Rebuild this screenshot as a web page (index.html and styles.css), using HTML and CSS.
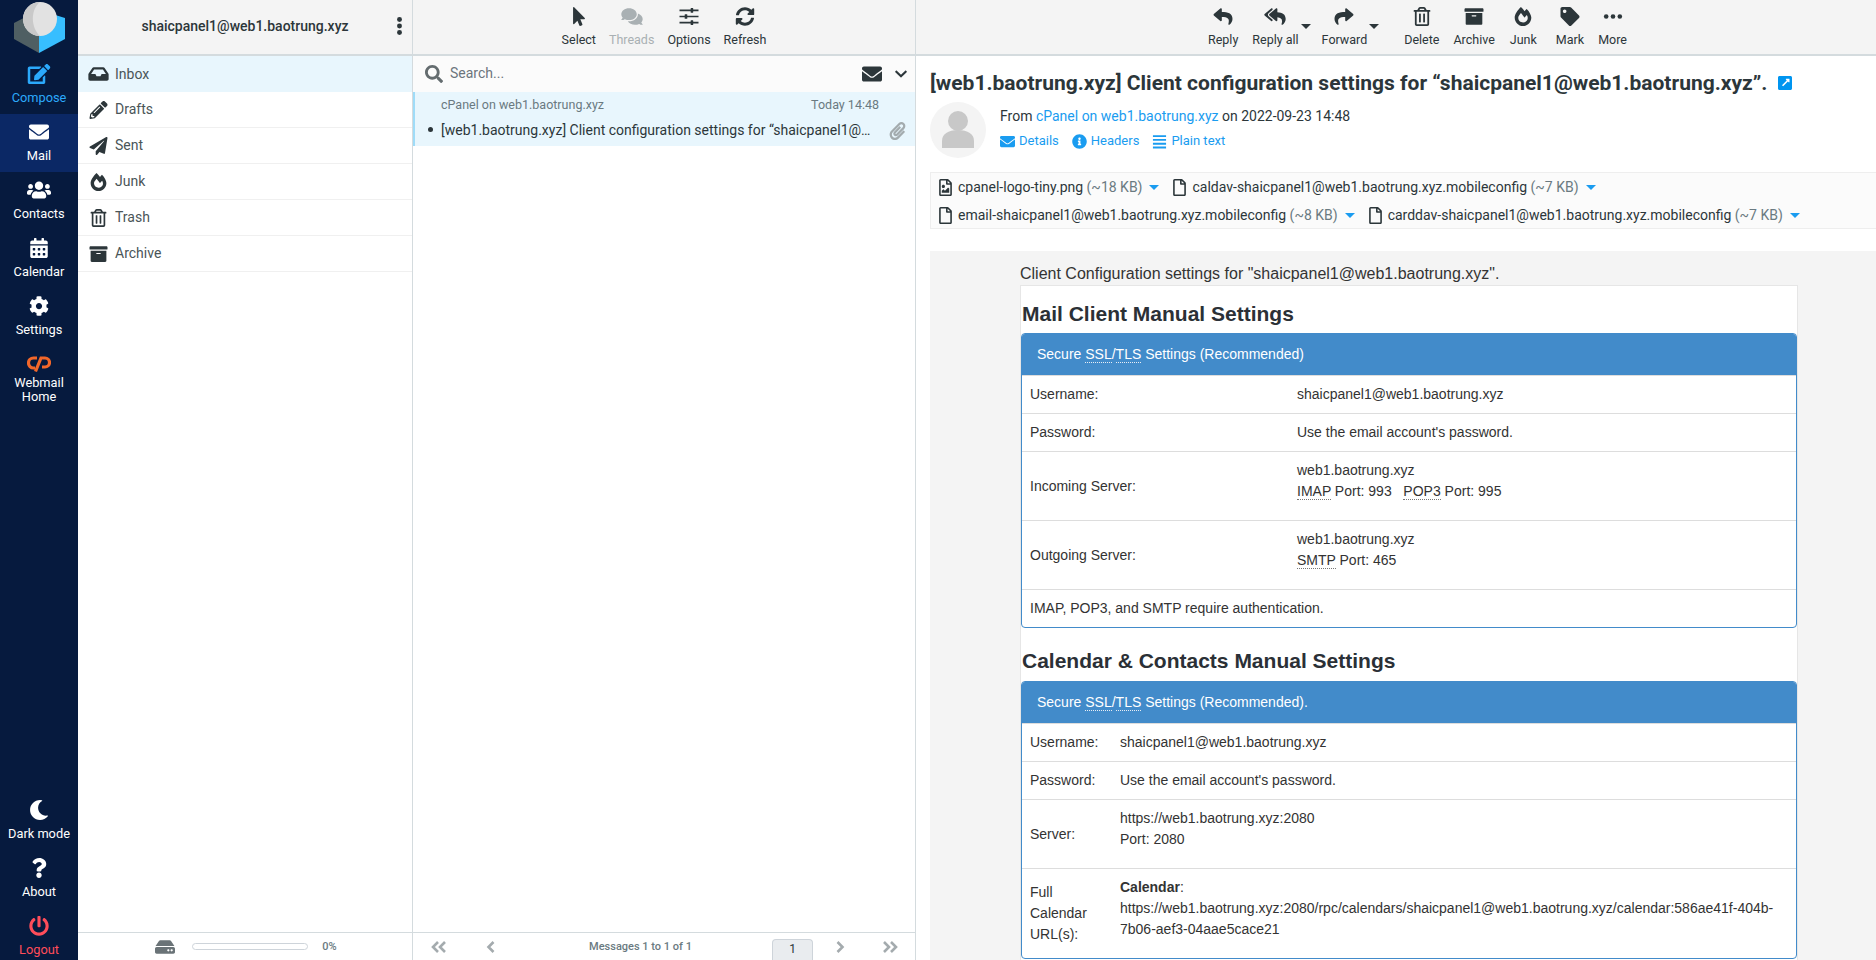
FILE: index.html
```html
<!DOCTYPE html>
<html lang="en">
<head>
    <meta charset="UTF-8">
    <title>Roundcube Webmail :: [web1.baotrung.xyz] Client configuration settings</title>
    <link rel="stylesheet" href="styles.css">
</head>
<body>

<!-- icon set -->
<svg class="icon-set" xmlns="http://www.w3.org/2000/svg">
    <symbol id="i-edit" viewBox="0 0 576 512"><path d="M402.6 83.2l90.2 90.2c3.8 3.8 3.8 10 0 13.8L274.4 405.6l-92.8 10.3c-12.4 1.4-22.9-9.1-21.5-21.5l10.3-92.8L388.8 83.2c3.8-3.8 10-3.8 13.8 0zm162-22.9l-48.8-48.8c-15.2-15.2-39.9-15.2-55.2 0l-35.4 35.4c-3.8 3.8-3.8 10 0 13.8l90.2 90.2c3.8 3.8 10 3.8 13.8 0l35.4-35.4c15.2-15.3 15.2-40 0-55.2zM384 346.2V448H64V128h229.8c3.2 0 6.2-1.3 8.5-3.5l40-40c7.6-7.6 2.2-20.5-8.5-20.5H48C21.5 64 0 85.5 0 112v352c0 26.5 21.5 48 48 48h352c26.5 0 48-21.5 48-48V306.2c0-10.7-12.9-16-20.5-8.5l-40 40c-2.2 2.3-3.5 5.3-3.5 8.5z"/></symbol>
    <symbol id="i-envelope" viewBox="0 0 512 512"><path d="M502.3 190.8c3.9-3.1 9.7-.2 9.7 4.7V400c0 26.5-21.5 48-48 48H48c-26.5 0-48-21.5-48-48V195.6c0-5 5.7-7.8 9.7-4.7 22.4 17.4 52.1 39.5 154.1 113.6 21.1 15.4 56.7 47.8 92.2 47.6 35.7.3 72-32.8 92.3-47.6 102-74.1 131.6-96.3 154-113.7zM256 320c23.2.4 56.6-29.2 73.4-41.4 132.7-96.3 142.8-104.7 173.4-128.7 5.8-4.5 9.2-11.5 9.2-18.9v-19c0-26.5-21.5-48-48-48H48C21.5 64 0 85.5 0 112v19c0 7.4 3.4 14.3 9.2 18.9 30.6 23.9 40.7 32.4 173.4 128.7 16.8 12.2 50.2 41.8 73.4 41.4z"/></symbol>
    <symbol id="i-users" viewBox="0 0 640 512"><path d="M96 224c35.3 0 64-28.7 64-64s-28.7-64-64-64-64 28.7-64 64 28.7 64 64 64zm448 0c35.3 0 64-28.7 64-64s-28.7-64-64-64-64 28.7-64 64 28.7 64 64 64zm32 32h-64c-17.6 0-33.5 7.1-45.1 18.6 40.3 22.1 68.9 62 75.1 109.4h66c17.7 0 32-14.3 32-32v-32c0-35.3-28.7-64-64-64zm-256 0c61.9 0 112-50.1 112-112S381.9 32 320 32 208 82.1 208 144s50.1 112 112 112zm76.8 32h-8.3c-20.8 10-43.9 16-68.5 16s-47.6-6-68.5-16h-8.3C179.6 288 128 339.6 128 403.2V432c0 26.5 21.5 48 48 48h288c26.5 0 48-21.5 48-48v-28.8c0-63.6-51.6-115.2-115.2-115.2zm-223.7-13.4C161.5 263.1 145.6 256 128 256H64c-35.3 0-64 28.7-64 64v32c0 17.7 14.3 32 32 32h65.9c6.3-47.4 34.9-87.3 75.2-109.4z"/></symbol>
    <symbol id="i-calendar" viewBox="0 0 448 512"><path d="M0 464c0 26.5 21.5 48 48 48h352c26.5 0 48-21.5 48-48V192H0v272zm320-196c0-6.6 5.4-12 12-12h40c6.6 0 12 5.4 12 12v40c0 6.6-5.4 12-12 12h-40c-6.6 0-12-5.4-12-12v-40zm0 128c0-6.6 5.4-12 12-12h40c6.6 0 12 5.4 12 12v40c0 6.6-5.4 12-12 12h-40c-6.6 0-12-5.4-12-12v-40zM192 268c0-6.6 5.4-12 12-12h40c6.6 0 12 5.4 12 12v40c0 6.6-5.4 12-12 12h-40c-6.6 0-12-5.4-12-12v-40zm0 128c0-6.6 5.4-12 12-12h40c6.6 0 12 5.4 12 12v40c0 6.6-5.4 12-12 12h-40c-6.6 0-12-5.4-12-12v-40zM64 268c0-6.6 5.4-12 12-12h40c6.6 0 12 5.4 12 12v40c0 6.6-5.4 12-12 12H76c-6.6 0-12-5.4-12-12v-40zm0 128c0-6.6 5.4-12 12-12h40c6.6 0 12 5.4 12 12v40c0 6.6-5.4 12-12 12H76c-6.6 0-12-5.4-12-12v-40zM400 64h-48V16c0-8.8-7.2-16-16-16h-32c-8.8 0-16 7.2-16 16v48H160V16c0-8.8-7.2-16-16-16h-32c-8.8 0-16 7.2-16 16v48H48C21.5 64 0 85.5 0 112v48h448v-48c0-26.5-21.5-48-48-48z"/></symbol>
    <symbol id="i-cog" viewBox="0 0 512 512"><path d="M487.4 315.7l-42.6-24.6c4.3-23.2 4.3-47 0-70.2l42.6-24.6c4.9-2.8 7.1-8.6 5.5-14-11.1-35.6-30-67.8-54.7-94.6-3.8-4.1-10-5.1-14.8-2.3L380.8 110c-17.9-15.4-38.5-27.3-60.8-35.1V25.8c0-5.6-3.9-10.5-9.4-11.7-36.7-8.2-74.3-7.8-109.2 0-5.5 1.2-9.4 6.1-9.4 11.7V75c-22.2 7.9-42.8 19.8-60.8 35.1L88.7 85.5c-4.9-2.8-11-1.9-14.8 2.3-24.7 26.7-43.6 58.9-54.7 94.6-1.7 5.4.6 11.2 5.5 14L67.3 221c-4.3 23.2-4.3 47 0 70.2l-42.6 24.6c-4.9 2.8-7.1 8.6-5.5 14 11.1 35.6 30 67.8 54.7 94.6 3.8 4.1 10 5.1 14.8 2.3l42.6-24.6c17.9 15.4 38.5 27.3 60.8 35.1v49.2c0 5.6 3.9 10.5 9.4 11.7 36.7 8.2 74.3 7.8 109.2 0 5.5-1.2 9.4-6.1 9.4-11.7v-49.2c22.2-7.9 42.8-19.8 60.8-35.1l42.6 24.6c4.9 2.8 11 1.9 14.8-2.3 24.7-26.7 43.6-58.9 54.7-94.6 1.5-5.5-.7-11.3-5.6-14.1zM256 336c-44.1 0-80-35.9-80-80s35.9-80 80-80 80 35.9 80 80-35.9 80-80 80z"/></symbol>
    <symbol id="i-moon" viewBox="0 0 512 512"><path d="M283.211 512c78.962 0 151.079-35.925 198.857-94.792 7.068-8.708-.639-21.43-11.562-19.35-124.203 23.654-238.262-71.576-238.262-196.954 0-72.222 38.662-138.635 101.498-174.394 9.686-5.512 7.25-20.197-3.756-22.23A258.156 258.156 0 0 0 283.211 0c-141.309 0-256 114.511-256 256 0 141.309 114.511 256 256 256z"/></symbol>
    <symbol id="i-question" viewBox="0 0 384 512"><path d="M202.021 0C122.202 0 70.503 32.703 29.914 91.026c-7.363 10.58-5.093 25.086 5.178 32.874l43.138 32.709c10.373 7.865 25.132 6.026 33.253-4.148 25.049-31.381 43.63-49.449 82.757-49.449 30.764 0 68.816 19.799 68.816 49.631 0 22.552-18.617 34.134-48.993 51.164-35.423 19.86-82.299 44.576-82.299 106.405V320c0 13.255 10.745 24 24 24h72.471c13.255 0 24-10.745 24-24v-5.773c0-42.86 125.268-44.645 125.268-160.627C377.504 66.256 286.902 0 202.021 0zM192 373.459c-38.196 0-69.271 31.075-69.271 69.271 0 38.195 31.075 69.27 69.271 69.27s69.271-31.075 69.271-69.271-31.075-69.27-69.271-69.27z"/></symbol>
    <symbol id="i-power" viewBox="0 0 512 512"><path d="M400 54.1c63 45 104 118.6 104 201.9 0 136.8-110.8 247.7-247.5 248C120 504.3 8.2 393 8 256.4 7.9 173.1 48.9 99.3 111.8 54.2c11.7-8.3 28-4.8 35 7.7L162.6 90c5.9 10.5 3.1 23.8-6.6 31-41.5 30.8-68 79.6-68 134.9-.1 92.3 74.5 168.1 168 168.1 91.6 0 168.6-74.2 168-169.1-.3-51.8-24.7-101.8-68.1-134-9.7-7.2-12.4-20.5-6.5-30.9l15.8-28.1c7-12.4 23.2-16.1 34.8-7.8zM296 264V24c0-13.3-10.7-24-24-24h-32c-13.3 0-24 10.7-24 24v240c0 13.3 10.7 24 24 24h32c13.3 0 24-10.7 24-24z"/></symbol>
    <symbol id="i-inbox" viewBox="0 0 576 512"><path d="M567.938 243.908L462.25 85.374A48.003 48.003 0 0 0 422.311 64H153.689a48 48 0 0 0-39.938 21.374L8.062 243.908A47.994 47.994 0 0 0 0 270.533V400c0 26.51 21.49 48 48 48h480c26.51 0 48-21.49 48-48V270.533a47.994 47.994 0 0 0-8.062-26.625zM162.252 128h251.497l85.333 128H376l-32 64H232l-32-64H76.918l85.334-128z"/></symbol>
    <symbol id="i-pencil" viewBox="0 0 512 512"><path d="M497.9 142.1l-46.1 46.1c-4.7 4.7-12.3 4.7-17 0l-111-111c-4.7-4.7-4.7-12.3 0-17l46.1-46.1c18.7-18.7 49.1-18.7 67.9 0l60.1 60.1c18.8 18.7 18.8 49.1 0 67.9zM284.2 99.8L21.6 362.4.4 483.9c-2.9 16.4 11.4 30.6 27.8 27.8l121.5-21.3 262.6-262.6c4.7-4.7 4.7-12.3 0-17l-111-111c-4.8-4.7-12.4-4.7-17.1 0zM124.1 339.9c-5.5-5.5-5.5-14.3 0-19.8l154-154c5.5-5.5 14.3-5.5 19.8 0s5.5 14.3 0 19.8l-154 154c-5.5 5.5-14.3 5.5-19.8 0zM88 424h48v36.3l-64.5 11.3-31.1-31.1L51.7 376H88v48z"/></symbol>
    <symbol id="i-plane" viewBox="0 0 512 512"><path d="M476 3.2L12.5 270.6c-18.1 10.4-15.8 35.6 2.2 43.2L121 358.4l287.3-253.2c5.5-4.9 13.3 2.6 8.6 8.3L176 407v80.5c0 23.6 28.5 32.9 42.5 15.8L282 426l124.6 52.2c14.2 6 30.4-2.9 33-18.2l72-432C515 7.8 493.3-6.8 476 3.2z"/></symbol>
    <symbol id="i-fire" viewBox="0 0 448 512"><path d="M323.56 51.2c-20.8 19.3-39.58 39.59-56.22 59.97C240.08 73.62 206.28 35.53 168 0 69.74 91.17 0 209.96 0 281.6 0 408.85 100.29 512 224 512s224-103.15 224-230.4c0-53.27-51.98-163.14-124.44-230.4zm-19.47 340.65C282.43 407.01 255.72 416 226.86 416 154.71 416 96 368.26 96 290.75c0-38.61 24.31-72.63 72.79-130.75 6.93 7.98 98.83 125.34 98.83 125.34l58.63-66.88c4.14 6.85 7.91 13.55 11.27 19.97 27.35 52.19 15.81 118.97-33.43 153.42z"/></symbol>
    <symbol id="i-trash" viewBox="0 0 448 512"><path d="M268 416h24a12 12 0 0 0 12-12V188a12 12 0 0 0-12-12h-24a12 12 0 0 0-12 12v216a12 12 0 0 0 12 12zM432 80h-82.41l-34-56.7A48 48 0 0 0 274.41 0H173.59a48 48 0 0 0-41.16 23.3L98.41 80H16A16 16 0 0 0 0 96v16a16 16 0 0 0 16 16h16v336a48 48 0 0 0 48 48h288a48 48 0 0 0 48-48V128h16a16 16 0 0 0 16-16V96a16 16 0 0 0-16-16zM171.84 50.91A6 6 0 0 1 177 48h94a6 6 0 0 1 5.15 2.91L293.61 80H154.39zM368 464H80V128h288zm-212-48h24a12 12 0 0 0 12-12V188a12 12 0 0 0-12-12h-24a12 12 0 0 0-12 12v216a12 12 0 0 0 12 12z"/></symbol>
    <symbol id="i-archive" viewBox="0 0 512 512"><path d="M32 448c0 17.7 14.3 32 32 32h384c17.7 0 32-14.3 32-32V160H32v288zm160-212c0-6.6 5.4-12 12-12h104c6.6 0 12 5.4 12 12v8c0 6.6-5.4 12-12 12H204c-6.6 0-12-5.4-12-12v-8zM480 32H32C14.3 32 0 46.3 0 64v48c0 8.8 7.2 16 16 16h480c8.8 0 16-7.2 16-16V64c0-17.7-14.3-32-32-32z"/></symbol>
    <symbol id="i-pointer" viewBox="0 0 320 512"><path d="M302.189 329.126H196.105l55.831 135.993c3.889 9.428-.555 19.999-9.444 23.999l-49.165 21.427c-9.165 4-19.443-.571-23.332-9.714l-53.053-129.136-86.664 89.138C18.729 472.71 0 463.554 0 447.977V18.299C0 1.899 19.921-6.096 30.277 5.443l284.412 292.542c11.472 11.179 3.007 31.141-12.5 31.141z"/></symbol>
    <symbol id="i-comments" viewBox="0 0 576 512"><path d="M416 192c0-88.4-93.1-160-208-160S0 103.6 0 192c0 34.3 14.1 65.9 38 92-13.4 30.2-35.5 54.2-35.8 54.5-2.2 2.3-2.8 5.7-1.5 8.7S4.8 352 8 352c36.6 0 66.9-12.3 88.7-25 32.2 15.7 70.3 25 111.3 25 114.9 0 208-71.6 208-160zm122 220c23.9-26 38-57.7 38-92 0-66.9-53.5-124.2-129.3-148.1.9 6.6 1.3 13.3 1.3 20.1 0 105.9-107.7 192-240 192-10.8 0-21.3-.8-31.7-1.9C207.8 439.6 281.8 480 368 480c41 0 79.1-9.2 111.3-25 21.8 12.7 52.1 25 88.7 25 3.2 0 6.1-1.9 7.3-4.8 1.3-2.9.7-6.3-1.5-8.7-.3-.3-22.4-24.2-35.8-54.500z"/></symbol>
    <symbol id="i-sliders" viewBox="0 0 512 512"><path d="M0 70h512v44H0zM0 234h512v44H0zM0 398h512v44H0zM310 30h50q10 0 10 10v104q0 10-10 10h-50q-10 0-10-10V40q0-10 10-10zM150 194h50q10 0 10 10v104q0 10-10 10h-50q-10 0-10-10V204q0-10 10-10zM310 358h50q10 0 10 10v104q0 10-10 10h-50q-10 0-10-10V368q0-10 10-10z"/></symbol>
    <symbol id="i-sync" viewBox="0 0 512 512"><path d="M370.72 133.28C339.458 104.008 298.888 87.962 255.848 88c-77.458.068-144.328 53.178-162.791 126.85-1.344 5.363-6.122 9.15-11.651 9.15H24.103c-7.498 0-13.194-6.807-11.807-14.176C33.933 94.924 134.813 8 256 8c66.448 0 126.791 26.136 171.315 68.685L463.03 40.97C478.149 25.851 504 36.559 504 57.941V192c0 13.255-10.745 24-24 24H345.941c-21.382 0-32.09-25.851-16.971-40.971l41.75-41.749zM32 296h134.059c21.382 0 32.09 25.851 16.971 40.971l-41.75 41.75c31.262 29.273 71.835 45.319 114.876 45.28 77.418-.07 144.315-53.144 162.787-126.849 1.344-5.363 6.122-9.15 11.651-9.15h57.304c7.498 0 13.194 6.807 11.807 14.176C478.067 417.076 377.187 504 256 504c-66.448 0-126.791-26.136-171.315-68.685L48.97 471.03C33.851 486.149 8 475.441 8 454.059V320c0-13.255 10.745-24 24-24z"/></symbol>
    <symbol id="i-reply" viewBox="0 0 512 512"><path d="M8.309 189.836L184.313 37.851C199.719 24.546 224 35.347 224 56.015v80.053c160.629 1.839 288 34.032 288 186.258 0 61.441-39.581 122.309-83.333 154.132-13.653 9.931-33.111-2.533-28.077-18.631 45.344-145.012-21.507-183.51-176.59-185.742V360c0 20.7-24.3 31.453-39.687 18.164l-176.004-152c-11.071-9.562-11.086-26.753 0-36.328z"/></symbol>
    <symbol id="i-reply-all" viewBox="0 0 576 512"><path d="M136.309 189.836L312.313 37.851C327.72 24.546 352 35.348 352 56.015v82.763c129.182 10.231 224 52.212 224 183.548 0 61.441-39.582 122.309-83.333 154.132-13.653 9.931-33.111-2.533-28.077-18.631 38.512-123.162-3.922-169.482-112.59-182.015v84.175c0 20.701-24.3 31.453-39.687 18.164L136.309 226.164c-11.071-9.561-11.086-26.753 0-36.328zm-128 36.328L184.313 378.15C199.7 391.439 224 380.687 224 359.986v-15.818l-108.606-93.785A55.96 55.96 0 0 1 96 207.998a55.953 55.953 0 0 1 19.393-42.38L224 71.832V56.015c0-20.667-24.28-31.469-39.687-18.164L8.309 189.836c-11.086 9.575-11.071 26.767 0 36.328z"/></symbol>
    <symbol id="i-share" viewBox="0 0 512 512"><path d="M503.691 189.836L327.687 37.851C312.281 24.546 288 35.347 288 56.015v80.053C127.371 137.907 0 170.1 0 322.326c0 61.441 39.581 122.309 83.333 154.132 13.653 9.931 33.111-2.533 28.077-18.631C66.066 312.814 132.917 274.316 288 272.085V360c0 20.7 24.3 31.453 39.687 18.164l176.004-152c11.071-9.562 11.086-26.753 0-36.328z"/></symbol>
    <symbol id="i-tag" viewBox="0 0 512 512"><path d="M0 252.118V48C0 21.49 21.49 0 48 0h204.118a48 48 0 0 1 33.941 14.059l211.882 211.882c18.745 18.745 18.745 49.137 0 67.882L293.823 497.941c-18.745 18.745-49.137 18.745-67.882 0L14.059 286.059A48 48 0 0 1 0 252.118zM112 64c-26.51 0-48 21.49-48 48s21.49 48 48 48 48-21.49 48-48-21.49-48-48-48z"/></symbol>
    <symbol id="i-dots-h" viewBox="0 0 512 512"><circle cx="72" cy="256" r="62"/><circle cx="256" cy="256" r="62"/><circle cx="440" cy="256" r="62"/></symbol>
    <symbol id="i-dots-v" viewBox="0 0 192 512"><circle cx="96" cy="72" r="70"/><circle cx="96" cy="256" r="70"/><circle cx="96" cy="440" r="70"/></symbol>
    <symbol id="i-search" viewBox="0 0 512 512"><path d="M505 442.7L405.3 343c-4.5-4.5-10.6-7-17-7H372c27.6-35.3 44-79.7 44-128C416 93.1 322.9 0 208 0S0 93.1 0 208s93.1 208 208 208c48.3 0 92.7-16.4 128-44v16.3c0 6.4 2.5 12.5 7 17l99.7 99.7c9.4 9.4 24.6 9.4 33.9 0l28.3-28.3c9.4-9.4 9.4-24.6.1-34zM208 336c-70.7 0-128-57.2-128-128 0-70.7 57.2-128 128-128 70.7 0 128 57.2 128 128 0 70.7-57.2 128-128 128z"/></symbol>
    <symbol id="i-chevron" viewBox="0 0 448 512"><path d="M207.029 381.476L12.686 187.132c-9.373-9.373-9.373-24.569 0-33.941l22.667-22.667c9.357-9.357 24.522-9.375 33.901-.04L224 284.505l154.745-154.021c9.379-9.335 24.544-9.317 33.901.04l22.667 22.667c9.373 9.373 9.373 24.569 0 33.941L240.971 381.476c-9.373 9.372-24.569 9.372-33.942 0z"/></symbol>
    <symbol id="i-clip" viewBox="0 0 448 512"><path d="M43.246 466.142c-58.43-60.289-57.341-157.511 1.386-217.581L254.392 34c44.316-45.332 116.351-45.336 160.671 0 43.89 44.894 43.943 117.329 0 162.276L232.214 383.128c-29.855 30.537-78.633 30.111-107.982-.998-28.275-29.97-27.368-77.473 1.452-106.953l143.743-146.835c6.182-6.314 16.312-6.422 22.626-.241l22.861 22.379c6.315 6.182 6.422 16.312.241 22.626L171.427 319.927c-4.932 5.045-5.236 13.428-.648 18.292 4.372 4.634 11.245 4.711 15.688.165l182.849-186.851c19.613-20.062 19.613-52.725-.011-72.798-19.189-19.627-49.957-19.637-69.154 0L90.39 293.295c-34.763 35.56-35.299 93.12-1.191 128.313 34.01 35.093 88.985 35.137 123.058.286l172.06-175.999c6.177-6.319 16.307-6.433 22.626-.256l22.877 22.364c6.319 6.177 6.434 16.307.256 22.626l-172.06 175.998c-59.576 60.938-155.943 60.216-214.77-.485z"/></symbol>
    <symbol id="i-file" viewBox="0 0 384 512"><path d="M369.9 97.9L286 14C277 5 264.8-.1 252.1-.1H48C21.5 0 0 21.5 0 48v416c0 26.5 21.5 48 48 48h288c26.5 0 48-21.5 48-48V131.9c0-12.7-5.1-25-14.1-34zM332.1 128H256V51.9l76.1 76.1zM48 464V48h160v104c0 13.3 10.7 24 24 24h104v288H48z"/></symbol>
    <symbol id="i-file-image" viewBox="0 0 384 512"><path d="M369.9 97.9L286 14C277 5 264.8-.1 252.1-.1H48C21.5 0 0 21.5 0 48v416c0 26.5 21.5 48 48 48h288c26.5 0 48-21.5 48-48V131.9c0-12.7-5.1-25-14.1-34zM332.1 128H256V51.9l76.1 76.1zM48 464V48h160v104c0 13.3 10.7 24 24 24h104v288H48zm32-48h224V288l-23.5-23.5c-4.7-4.7-12.3-4.7-17 0L176 352l-39.5-39.5c-4.7-4.7-12.3-4.7-17 0L80 352v64zm48-240c-26.5 0-48 21.5-48 48s21.5 48 48 48 48-21.5 48-48-21.5-48-48-48z"/></symbol>
    <symbol id="i-hdd" viewBox="0 0 576 512"><path d="M576 304v96c0 26.51-21.49 48-48 48H48c-26.51 0-48-21.49-48-48v-96c0-26.51 21.49-48 48-48h480c26.51 0 48 21.49 48 48zm-48-80a79.557 79.557 0 0 1 30.777 6.165L462.25 85.374A48.003 48.003 0 0 0 422.311 64H153.689a48 48 0 0 0-39.938 21.374L17.223 230.165A79.557 79.557 0 0 1 48 224h480zm-48 96c-17.673 0-32 14.327-32 32s14.327 32 32 32 32-14.327 32-32-14.327-32-32-32zm-96 0c-17.673 0-32 14.327-32 32s14.327 32 32 32 32-14.327 32-32-14.327-32-32-32z"/></symbol>
    <symbol id="i-info" viewBox="0 0 512 512"><path d="M256 8C119.043 8 8 119.083 8 256c0 136.997 111.043 248 248 248s248-111.003 248-248C504 119.083 392.957 8 256 8zm0 110c23.196 0 42 18.804 42 42s-18.804 42-42 42-42-18.804-42-42 18.804-42 42-42zm56 254c0 6.627-5.373 12-12 12h-88c-6.627 0-12-5.373-12-12v-24c0-6.627 5.373-12 12-12h12v-64h-12c-6.627 0-12-5.373-12-12v-24c0-6.627 5.373-12 12-12h64c6.627 0 12 5.373 12 12v100h12c6.627 0 12 5.373 12 12v24z"/></symbol>
    <symbol id="i-lines" viewBox="0 0 448 512"><path d="M0 40h448v64H0zM0 170h448v64H0zM0 300h448v64H0zM0 430h448v64H0z"/></symbol>
    <symbol id="i-external" viewBox="0 0 448 512"><path d="M48 32h352c26.5 0 48 21.5 48 48v352c0 26.5-21.500 48-48 48H48c-26.5 0-48-21.500-48-48V80c0-26.500 21.500-48 48-48zm216 88c-14 0-21 17-11 27l26 26-151 151 36 36 151-151 26 26c10 10 27 3 27-11v-92c0-7-5-12-12-12z"/></symbol>
    <symbol id="i-double-left" viewBox="0 0 16 12"><path d="M7 1L2 6l5 5M14 1L9 6l5 5" fill="none" stroke="currentColor" stroke-width="2.6"/></symbol>
    <symbol id="i-left" viewBox="0 0 10 12"><path d="M7.500 1L2.500 6l5 5" fill="none" stroke="currentColor" stroke-width="2.6"/></symbol>
    <symbol id="i-right" viewBox="0 0 10 12"><path d="M2.500 1l5 5-5 5" fill="none" stroke="currentColor" stroke-width="2.6"/></symbol>
    <symbol id="i-double-right" viewBox="0 0 16 12"><path d="M2 1l5 5-5 5M9 1l5 5-5 5" fill="none" stroke="currentColor" stroke-width="2.6"/></symbol>
</svg>

<div class="layout">

    <!-- main menu -->
    <nav class="menu">
        <a class="logo">
            <svg viewBox="0 0 78 56" width="78" height="56">
                <path d="M14 23L39 10V53L14 39Z" fill="#4f5f63"/>
                <path d="M65 18L39 10V53L65 39Z" fill="#37beff"/>
                <circle cx="40" cy="19" r="17" fill="#e2e2e2"/>
                <path d="M40 2A17 17 0 0 0 40 36C31 28 30 10 40 2Z" fill="#c9c9c9"/>
            </svg>
        </a>
        <a class="menu-item compose">
            <svg class="menu-icon"><use href="#i-edit"/></svg>
            <span>Compose</span>
        </a>
        <a class="menu-item active">
            <svg class="menu-icon"><use href="#i-envelope"/></svg>
            <span>Mail</span>
        </a>
        <a class="menu-item">
            <svg class="menu-icon"><use href="#i-users"/></svg>
            <span>Contacts</span>
        </a>
        <a class="menu-item">
            <svg class="menu-icon"><use href="#i-calendar"/></svg>
            <span>Calendar</span>
        </a>
        <a class="menu-item">
            <svg class="menu-icon"><use href="#i-cog"/></svg>
            <span>Settings</span>
        </a>
        <a class="menu-item home">
            <svg class="menu-icon cp-logo" viewBox="0 0 24 18"><path d="M10 3H6.500a5 5 0 0 0 0 10H8M8.500 16.500L14 3h4a4.500 4.500 0 0 1 0 9h-3" fill="none" stroke="#f2672a" stroke-width="3.200"/></svg>
            <span>Webmail Home</span>
        </a>
        <div class="menu-bottom">
            <a class="menu-item">
                <svg class="menu-icon"><use href="#i-moon"/></svg>
                <span>Dark mode</span>
            </a>
            <a class="menu-item">
                <svg class="menu-icon"><use href="#i-question"/></svg>
                <span>About</span>
            </a>
            <a class="menu-item logout">
                <svg class="menu-icon"><use href="#i-power"/></svg>
                <span>Logout</span>
            </a>
        </div>
    </nav>

    <!-- folders -->
    <section class="folders">
        <header class="bar folders-head">
            <span class="account">shaicpanel1@web1.baotrung.xyz</span>
            <svg class="kebab"><use href="#i-dots-v"/></svg>
        </header>
        <ul class="folder-list">
            <li class="selected"><svg><use href="#i-inbox"/></svg><span>Inbox</span></li>
            <li><svg><use href="#i-pencil"/></svg><span>Drafts</span></li>
            <li><svg><use href="#i-plane"/></svg><span>Sent</span></li>
            <li><svg><use href="#i-fire"/></svg><span>Junk</span></li>
            <li><svg><use href="#i-trash"/></svg><span>Trash</span></li>
            <li><svg><use href="#i-archive"/></svg><span>Archive</span></li>
        </ul>
        <footer class="pane-foot quota">
            <svg class="quota-icon"><use href="#i-hdd"/></svg>
            <div class="quota-bar"></div>
            <span>0%</span>
        </footer>
    </section>

    <!-- message list -->
    <section class="list">
        <header class="bar toolbar list-tools">
            <a class="tool"><svg><use href="#i-pointer"/></svg>Select</a>
            <a class="tool disabled"><svg><use href="#i-comments"/></svg>Threads</a>
            <a class="tool"><svg><use href="#i-sliders"/></svg>Options</a>
            <a class="tool"><svg><use href="#i-sync"/></svg>Refresh</a>
        </header>
        <div class="search">
            <svg class="search-icon"><use href="#i-search"/></svg>
            <span class="search-text">Search...</span>
            <svg class="search-env"><use href="#i-envelope"/></svg>
            <svg class="search-chev"><use href="#i-chevron"/></svg>
        </div>
        <div class="message-row">
            <div class="row-top">
                <span>cPanel on web1.baotrung.xyz</span>
                <span>Today 14:48</span>
            </div>
            <div class="row-subject">
                <i class="dot"></i>
                <span class="subject-text">[web1.baotrung.xyz] Client configuration settings for “shaicpanel1@web1.baotrung.xyz”.</span>
                <svg class="clip"><use href="#i-clip"/></svg>
            </div>
        </div>
        <footer class="pane-foot pager">
            <a class="page-btn"><svg class="wide"><use href="#i-double-left"/></svg></a>
            <a class="page-btn"><svg><use href="#i-left"/></svg></a>
            <span class="count">Messages 1 to 1 of 1</span>
            <span class="page-num">1</span>
            <a class="page-btn"><svg><use href="#i-right"/></svg></a>
            <a class="page-btn"><svg class="wide"><use href="#i-double-right"/></svg></a>
        </footer>
    </section>

    <!-- message view -->
    <main class="content">
        <header class="bar toolbar view-tools">
            <a class="tool"><svg><use href="#i-reply"/></svg>Reply</a>
            <a class="tool drop reply-all"><svg><use href="#i-reply-all"/></svg>Reply all<i class="caret"></i></a>
            <a class="tool drop forward"><svg><use href="#i-share"/></svg>Forward<i class="caret"></i></a>
            <a class="tool"><svg><use href="#i-trash"/></svg>Delete</a>
            <a class="tool"><svg><use href="#i-archive"/></svg>Archive</a>
            <a class="tool tool-junk"><svg><use href="#i-fire"/></svg>Junk</a>
            <a class="tool tool-mark"><svg><use href="#i-tag"/></svg>Mark</a>
            <a class="tool"><svg><use href="#i-dots-h"/></svg>More</a>
        </header>

        <div class="message">
            <h2 class="subject">[web1.baotrung.xyz] Client configuration settings for “shaicpanel1@web1.baotrung.xyz”. <svg class="external"><use href="#i-external"/></svg></h2>

            <div class="sender">
                <div class="avatar">
                    <svg viewBox="0 0 56 56" width="56" height="56">
                        <circle cx="28" cy="19" r="10" fill="#c8c8c8"/>
                        <path d="M12 46V39c0-7 6-11 16-11s16 4 16 11v7z" fill="#c8c8c8"/>
                    </svg>
                </div>
                <div class="sender-info">
                    <div class="from">From <a>cPanel on web1.baotrung.xyz</a> on 2022-09-23 14:48</div>
                    <div class="header-links">
                        <a><svg><use href="#i-envelope"/></svg>Details</a>
                        <a><svg><use href="#i-info"/></svg>Headers</a>
                        <a><svg><use href="#i-lines"/></svg>Plain text</a>
                    </div>
                </div>
            </div>

            <ul class="attachments">
                <li><svg><use href="#i-file-image"/></svg>cpanel-logo-tiny.png <span class="size">(~18 KB)</span><i class="caret"></i></li>
                <li><svg><use href="#i-file"/></svg>caldav-shaicpanel1@web1.baotrung.xyz.mobileconfig <span class="size">(~7 KB)</span><i class="caret"></i></li>
                <li><svg><use href="#i-file"/></svg>email-shaicpanel1@web1.baotrung.xyz.mobileconfig <span class="size">(~8 KB)</span><i class="caret"></i></li>
                <li><svg><use href="#i-file"/></svg>carddav-shaicpanel1@web1.baotrung.xyz.mobileconfig <span class="size">(~7 KB)</span><i class="caret"></i></li>
            </ul>

            <div class="mail-body">
                <p class="intro">Client Configuration settings for "shaicpanel1@web1.baotrung.xyz".</p>
                <div class="sheet">
                    <h3>Mail Client Manual Settings</h3>
                    <div class="panel">
                        <div class="panel-head">Secure <abbr title="Secure Sockets Layer">SSL</abbr>/<abbr title="Transport Layer Security">TLS</abbr> Settings (Recommended)</div>
                        <table class="mail-table">
                            <tr><td>Username:</td><td>shaicpanel1@web1.baotrung.xyz</td></tr>
                            <tr><td>Password:</td><td>Use the email account's password.</td></tr>
                            <tr><td>Incoming Server:</td><td><p>web1.baotrung.xyz<br><abbr title="Internet Message Access Protocol">IMAP</abbr> Port: 993 &nbsp; <abbr title="Post Office Protocol">POP3</abbr> Port: 995</p></td></tr>
                            <tr><td>Outgoing Server:</td><td><p>web1.baotrung.xyz<br><abbr title="Simple Mail Transfer Protocol">SMTP</abbr> Port: 465</p></td></tr>
                            <tr><td colspan="2">IMAP, POP3, and SMTP require authentication.</td></tr>
                        </table>
                    </div>
                    <h3>Calendar &amp; Contacts Manual Settings</h3>
                    <div class="panel">
                        <div class="panel-head">Secure <abbr title="Secure Sockets Layer">SSL</abbr>/<abbr title="Transport Layer Security">TLS</abbr> Settings (Recommended).</div>
                        <table class="cal-table">
                            <tr><td>Username:</td><td>shaicpanel1@web1.baotrung.xyz</td></tr>
                            <tr><td>Password:</td><td>Use the email account's password.</td></tr>
                            <tr><td>Server:</td><td><p>https://web1.baotrung.xyz:2080<br>Port: 2080</p></td></tr>
                            <tr><td>Full Calendar URL(s):</td><td><p><b>Calendar</b>:<br>https://web1.baotrung.xyz:2080/rpc/calendars/shaicpanel1@web1.baotrung.xyz/calendar:586ae41f-404b-7b06-aef3-04aae5cace21</p></td></tr>
                        </table>
                    </div>
                </div>
            </div>
        </div>
    </main>
</div>

</body>
</html>
```

FILE: styles.css
```css
* {
    box-sizing: border-box;
}
html, body {
    height: 100%;
    margin: 0;
    overflow: hidden;
}
body {
    font-family: Roboto, "Liberation Sans", sans-serif;
    font-size: 14px;
    color: #2c363a;
    background-color: #fff;
}
a {
    color: inherit;
    text-decoration: none;
}
ul {
    list-style: none;
    margin: 0;
    padding: 0;
}
svg {
    fill: currentColor;
    display: block;
}
.icon-set {
    display: none;
}
.layout {
    display: flex;
    height: 960px;
}

/* main menu */
.menu {
    width: 78px;
    flex: none;
    display: flex;
    flex-direction: column;
    background-color: #061a3e;
    color: #fff;
}
.logo {
    height: 56px;
    flex: none;
}
.menu-item {
    height: 58px;
    flex: none;
    display: flex;
    flex-direction: column;
    align-items: center;
    padding-top: 8px;
    font-size: 12.8px;
    line-height: 14px;
    text-align: center;
}
.menu-icon {
    width: 24px;
    height: 20px;
    margin-bottom: 7px;
}
.menu-item.compose {
    color: #2ba9fb;
}
.menu-item.active {
    background-color: #0b2865;
}
.menu-item.home {
    padding: 8px 6px 0;
}
.cp-logo {
    margin-bottom: 2px;
}
.menu-item.logout {
    color: #ff4d5a;
}
.menu-bottom {
    margin-top: auto;
}
.menu-bottom .menu-item {
    padding-top: 14px;
}

/* shared bars */
.bar {
    height: 56px;
    flex: none;
    background-color: #f4f4f4;
    border-bottom: 2px solid #d4dbde;
}
.pane-foot {
    height: 28px;
    flex: none;
    margin-top: auto;
    border-top: 1px solid #d4dbde;
    display: flex;
    align-items: center;
}
.toolbar {
    display: flex;
}
.tool {
    position: relative;
    display: flex;
    flex-direction: column;
    align-items: center;
    padding-top: 7px;
    font-size: 12.5px;
    line-height: 14px;
}
.tool svg {
    width: 22px;
    height: 19px;
    margin-bottom: 7px;
}
.tool.disabled {
    color: #a9b0b3;
}
.caret {
    display: inline-block;
    width: 0;
    height: 0;
    border-left: 5px solid transparent;
    border-right: 5px solid transparent;
    border-top: 5px solid #2c363a;
}
.tool .caret {
    position: absolute;
    top: 24px;
    right: -12px;
}

/* folders */
.folders {
    width: 335px;
    flex: none;
    display: flex;
    flex-direction: column;
    border-right: 1px solid #d4dbde;
}
.folders-head {
    position: relative;
    display: flex;
    align-items: center;
    justify-content: center;
    padding-bottom: 2px;
}
.account {
    font-weight: 500;
    font-size: 14px;
}
.kebab {
    position: absolute;
    right: 9px;
    top: 17px;
    width: 7px;
    height: 18px;
}
.folder-list li {
    height: 36px;
    display: flex;
    align-items: center;
    padding-left: 10px;
    border-bottom: 1px solid #f0f0f0;
    color: #4a5558;
}
.folder-list li span {
    margin-bottom: 1px;
}
.folder-list li svg {
    width: 21px;
    height: 18px;
    margin-right: 6px;
    color: #2c363a;
}
.folder-list .selected {
    background-color: #e8f6fd;
    border-bottom: 0;
}
.quota {
    justify-content: center;
    gap: 17px;
    padding-left: 2px;
    font-size: 11px;
    font-weight: 500;
    color: #6a7a81;
}
.quota span {
    margin-left: -3px;
}
.quota-icon {
    width: 20px;
    height: 18px;
    color: #6a7377;
}
.quota-bar {
    width: 116px;
    height: 7px;
    border: 1px solid #ced4da;
    border-radius: 4px;
}

/* message list */
.list {
    width: 503px;
    flex: none;
    display: flex;
    flex-direction: column;
    border-right: 1px solid #d4dbde;
}
.list-tools {
    justify-content: center;
    gap: 13px;
}
.search {
    height: 36px;
    flex: none;
    display: flex;
    align-items: center;
    padding: 0 8px 0 12px;
    background-color: #fbfbfb;
}
.search-icon {
    width: 18px;
    height: 18px;
    color: #646c6f;
}
.search-text {
    flex: 1;
    margin: 0 0 2px 7px;
    color: #6c757d;
}
.search-env {
    width: 20px;
    height: 20px;
}
.search-chev {
    width: 12px;
    height: 14px;
    margin-left: 13px;
}
.message-row {
    height: 54px;
    flex: none;
    background-color: #e8f6fd;
    border-left: 2px solid #9fdcf8;
    padding: 4px 36px 0 26px;
    position: relative;
}
.row-top {
    display: flex;
    justify-content: space-between;
    font-size: 12.5px;
    line-height: 18px;
    color: #6a7a81;
}
.row-subject {
    margin-top: 6px;
    line-height: 20px;
    display: flex;
    align-items: center;
}
.subject-text {
    width: 433px;
    flex: none;
    overflow: hidden;
    white-space: nowrap;
    text-overflow: ellipsis;
}
.dot {
    position: absolute;
    left: 13px;
    top: 35px;
    width: 5px;
    height: 5px;
    border-radius: 50%;
    background-color: #2c363a;
}
.clip {
    position: absolute;
    right: 9px;
    top: 30px;
    width: 17px;
    height: 18px;
    color: #a3abae;
}
.pager {
    color: #8a9396;
    font-size: 11px;
    font-weight: 500;
}
.page-btn {
    width: 50px;
    display: flex;
    justify-content: center;
    color: #a4abae;
}
.page-btn:nth-child(-n+2) {
    width: 52px;
}
.page-btn svg {
    width: 10px;
    height: 12px;
}
.page-btn svg.wide {
    width: 16px;
}
.count {
    flex: 1;
    padding-right: 8px;
    text-align: center;
    color: #6a7a81;
}
.page-num {
    width: 41px;
    height: 21px;
    align-self: flex-end;
    margin-right: 2px;
    text-align: center;
    line-height: 18px;
    color: #2c363a;
    font-size: 12px;
    font-weight: 400;
    background-color: #e9ecef;
    border: 1px solid #ced4da;
    border-bottom: 0;
    border-radius: 4px 4px 0 0;
}

/* message view */
.content {
    flex: 1;
    min-width: 0;
    display: flex;
    flex-direction: column;
}
.view-tools {
    padding-left: 292px;
    gap: 14px;
}
.reply-all {
    margin-right: 9px;
}
.forward {
    margin-right: 23px;
}
.tool-junk {
    margin-left: 1px;
}
.tool-mark {
    margin-left: 5px;
}
.message {
    flex: 1;
    min-height: 0;
    overflow: hidden;
    padding: 14px 0 0 14px;
}
.subject {
    margin: 0;
    font-size: 21px;
    font-weight: 700;
    line-height: 26px;
    display: flex;
    align-items: center;
    gap: 5px;
    white-space: nowrap;
}
.external {
    width: 14px;
    height: 16px;
    color: #0095f0;
    margin-left: 6px;
}
.sender {
    display: flex;
    margin-top: 6px;
    height: 56px;
}
.avatar {
    width: 56px;
    height: 56px;
    border-radius: 50%;
    background-color: #f4f4f4;
    overflow: hidden;
}
.sender-info {
    margin-left: 14px;
    padding-top: 4px;
    font-size: 14px;
    line-height: 20px;
}
.sender-info a {
    color: #1a9cf0;
}
.header-links {
    display: flex;
    gap: 13px;
    margin-top: 5px;
    font-size: 13px;
}
.header-links a {
    display: flex;
    align-items: center;
    gap: 4px;
}
.header-links svg {
    width: 15px;
    height: 15px;
}
.attachments {
    margin-top: 14px;
    padding: 0 8px;
    height: 57px;
    display: flex;
    flex-wrap: wrap;
    column-gap: 14px;
    align-content: flex-start;
    background-color: #fbfbfb;
    border: 1px solid #eee;
    border-right: 0;
    font-size: 14px;
}
.attachments li {
    height: 28px;
    display: flex;
    align-items: center;
    white-space: pre;
}
.attachments svg {
    width: 13px;
    height: 17px;
    margin-right: 6px;
}
.size {
    color: #6a7a81;
}
.attachments .caret {
    margin-left: 7px;
    border-top-color: #1a9cf0;
}

/* mail body */
.mail-body {
    margin: 22px 0 0 0;
    padding: 12px 78px 0 90px;
    background-color: #f4f4f4;
    font-family: "Liberation Sans", Arial, sans-serif;
    color: #333;
    height: 800px;
}
.intro {
    margin: 0;
    font-size: 16px;
    line-height: 21px;
}
.sheet {
    margin-top: 1px;
    border: 1px solid #e6e6e6;
    background-color: #fff;
    line-height: 21px;
}
.sheet h3 {
    margin: 21px 0 8px;
    padding-left: 1px;
    font-size: 21px;
    line-height: 24px;
    font-weight: 700;
    color: #2b3036;
}
.sheet h3:first-child {
    margin: 16px 0 7px;
}
.panel {
    margin-bottom: 20px;
    border: 1px solid #428bca;
    border-radius: 4px;
    overflow: hidden;
}
.panel-head {
    height: 42px;
    padding: 10px 15px;
    background-color: #428bca;
    color: #fff;
    border-bottom: 1px solid #ddd;
}
.panel-head abbr {
    border-bottom-color: #e8eef5;
}
abbr {
    text-decoration: none;
    border-bottom: 1px dotted #777;
}
table {
    width: 100%;
    border-collapse: collapse;
    table-layout: fixed;
}
td {
    padding: 8px;
    vertical-align: middle;
    border-top: 1px solid #ddd;
    overflow-wrap: anywhere;
}
tr:first-child td {
    border-top: 0;
}
td p {
    margin: 0 0 10px;
}
.mail-table td:first-child {
    width: 267px;
}
.cal-table td:first-child {
    width: 90px;
}
```
